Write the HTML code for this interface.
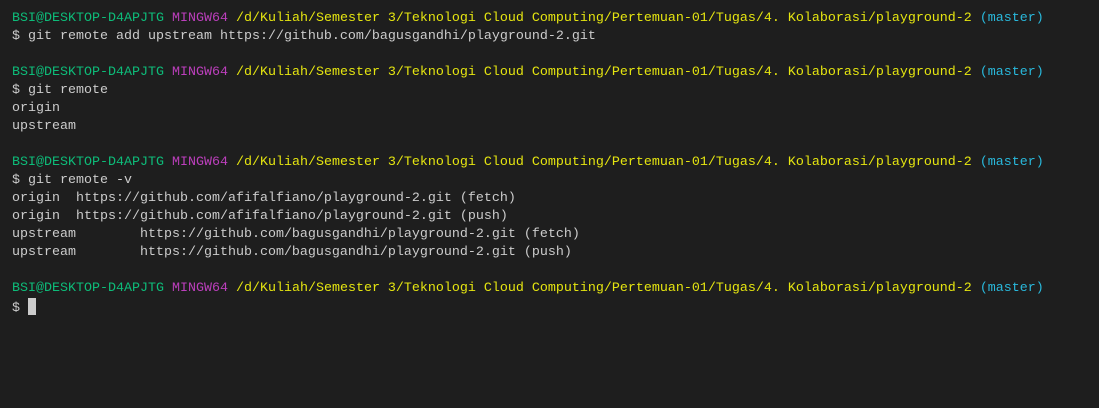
<!DOCTYPE html><html><head><style>
body{margin:0;background:#1e1e1e;width:1099px;height:408px;overflow:hidden}
pre{margin:0;padding:10px 0 0 12px;font-family:"Liberation Mono",monospace;font-size:13.33px;line-height:18px;color:#cccccc}
.g{color:#0dbc79}.m{color:#bc3fbc}.y{color:#e5e510}.b{color:#29b8db}
.c{display:inline-block;width:8px;height:17px;background:#cccccc;vertical-align:-4px}
</style></head><body><pre><span class="g">BSI@DESKTOP-D4APJTG</span> <span class="m">MINGW64</span> <span class="y">/d/Kuliah/Semester 3/Teknologi Cloud Computing/Pertemuan-01/Tugas/4. Kolaborasi/playground-2</span> <span class="b">(master)</span>
$ git remote add upstream https://github.com/bagusgandhi/playground-2.git

<span class="g">BSI@DESKTOP-D4APJTG</span> <span class="m">MINGW64</span> <span class="y">/d/Kuliah/Semester 3/Teknologi Cloud Computing/Pertemuan-01/Tugas/4. Kolaborasi/playground-2</span> <span class="b">(master)</span>
$ git remote
origin
upstream

<span class="g">BSI@DESKTOP-D4APJTG</span> <span class="m">MINGW64</span> <span class="y">/d/Kuliah/Semester 3/Teknologi Cloud Computing/Pertemuan-01/Tugas/4. Kolaborasi/playground-2</span> <span class="b">(master)</span>
$ git remote -v
origin  https://github.com/afifalfiano/playground-2.git (fetch)
origin  https://github.com/afifalfiano/playground-2.git (push)
upstream        https://github.com/bagusgandhi/playground-2.git (fetch)
upstream        https://github.com/bagusgandhi/playground-2.git (push)

<span class="g">BSI@DESKTOP-D4APJTG</span> <span class="m">MINGW64</span> <span class="y">/d/Kuliah/Semester 3/Teknologi Cloud Computing/Pertemuan-01/Tugas/4. Kolaborasi/playground-2</span> <span class="b">(master)</span>
$ <span class="c"></span></pre></body></html>
